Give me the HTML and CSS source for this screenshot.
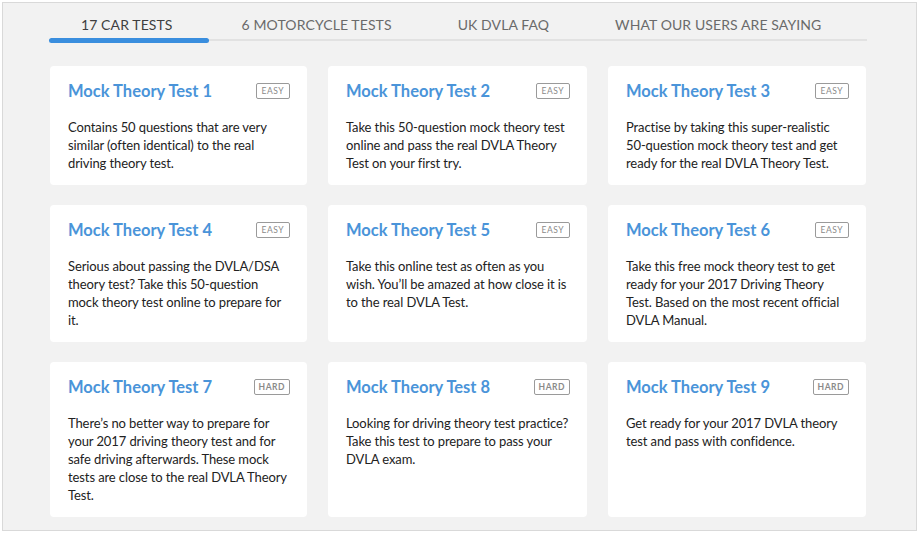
FILE: index.html
```html
<!DOCTYPE html>
<html lang="en">
<head>
<meta charset="utf-8">
<title>Mock Theory Tests</title>
<link rel="stylesheet" href="styles.css">
</head>
<body>
<div class="frame">
  <nav class="tabs">
    <a class="tab active">17 CAR TESTS</a>
    <a class="tab">6 MOTORCYCLE TESTS</a>
    <a class="tab">UK DVLA FAQ</a>
    <a class="tab">WHAT OUR USERS ARE SAYING</a>
  </nav>
  <div class="grid">
    <div class="card">
      <div class="card-head"><h3 class="title">Mock Theory Test 1</h3><span class="badge">EASY</span></div>
      <p class="desc">Contains 50 questions that are very similar (often identical) to the real driving theory test.</p>
    </div>
    <div class="card">
      <div class="card-head"><h3 class="title">Mock Theory Test 2</h3><span class="badge">EASY</span></div>
      <p class="desc">Take this 50-question mock theory test online and pass the real DVLA Theory Test on your first try.</p>
    </div>
    <div class="card">
      <div class="card-head"><h3 class="title">Mock Theory Test 3</h3><span class="badge">EASY</span></div>
      <p class="desc">Practise by taking this super-realistic 50-question mock theory test and get ready for the real DVLA Theory Test.</p>
    </div>
    <div class="card">
      <div class="card-head"><h3 class="title">Mock Theory Test 4</h3><span class="badge">EASY</span></div>
      <p class="desc">Serious about passing the DVLA/DSA theory test? Take this 50-question mock theory test online to prepare for it.</p>
    </div>
    <div class="card">
      <div class="card-head"><h3 class="title">Mock Theory Test 5</h3><span class="badge">EASY</span></div>
      <p class="desc">Take this online test as often as you wish. You’ll be amazed at how close it is to the real DVLA Test.</p>
    </div>
    <div class="card">
      <div class="card-head"><h3 class="title">Mock Theory Test 6</h3><span class="badge">EASY</span></div>
      <p class="desc">Take this free mock theory test to get ready for your 2017 Driving Theory Test. Based on the most recent official DVLA Manual.</p>
    </div>
    <div class="card">
      <div class="card-head"><h3 class="title">Mock Theory Test 7</h3><span class="badge hard">HARD</span></div>
      <p class="desc">There’s no better way to prepare for your 2017 driving theory test and for safe driving afterwards. These mock tests are close to the real DVLA Theory Test.</p>
    </div>
    <div class="card">
      <div class="card-head"><h3 class="title">Mock Theory Test 8</h3><span class="badge hard">HARD</span></div>
      <p class="desc">Looking for driving theory test practice? Take this test to prepare to pass your DVLA exam.</p>
    </div>
    <div class="card">
      <div class="card-head"><h3 class="title">Mock Theory Test 9</h3><span class="badge hard">HARD</span></div>
      <p class="desc">Get ready for your 2017 DVLA theory test and pass with confidence.</p>
    </div>
  </div>
</div>
</body>
</html>
```

FILE: styles.css
```css
* { box-sizing: border-box; }
html, body { margin: 0; padding: 0; background: #fff; }
body {
  font-family: Lato, "Open Sans", "Liberation Sans", sans-serif;
  color: #222;
}
.frame {
  margin: 2px 3px 3px 2px;
  height: 529px;
  border: 1px solid #d9d9d9;
  background: #f2f2f2;
  padding: 0 49px 0 46px;
}
.tabs {
  display: flex;
  height: 38px;
  border-bottom: 2px solid #e2e2e2;
}
.tab {
  display: block;
  padding: 13px 33px 0 33px;
  font-size: 14px;
  line-height: 17px;
  color: #6a6a6a;
  letter-spacing: 0.1px;
  position: relative;
}
.tab.active {
  color: #3f3f3f;
  padding-left: 32px;
  padding-right: 36px;
}
.tab.active::after {
  content: "";
  position: absolute;
  left: 0;
  right: 0;
  bottom: -4px;
  height: 5px;
  border-radius: 3px;
  background: #3a8ede;
}
.grid {
  margin-top: 25px;
  margin-left: 1px;
  display: grid;
  grid-template-columns: 257px 259px 258px;
  column-gap: 21px;
  row-gap: 20px;
}
.card {
  background: #fff;
  border-radius: 4px;
  padding: 14px 16px 13px 18px;
}
.card-head {
  display: flex;
  justify-content: space-between;
  align-items: center;
  height: 22px;
}
.title {
  margin: 0;
  font-size: 16.5px;
  line-height: 22px;
  font-weight: 700;
  color: #4a94d9;
}
.badge {
  font-size: 8.5px;
  line-height: 14px;
  padding: 0 5px;
  margin-right: 1px;
  border: 1px solid #9a9a9a;
  border-radius: 2px;
  color: #8a8a8a;
  letter-spacing: 0.5px;
}
.badge.hard { font-weight: 700; padding: 0 4px; }
.desc {
  margin: 16px 0 0 0;
  font-size: 13px;
  line-height: 18px;
  letter-spacing: -0.1px;
  color: #222;
}
```
